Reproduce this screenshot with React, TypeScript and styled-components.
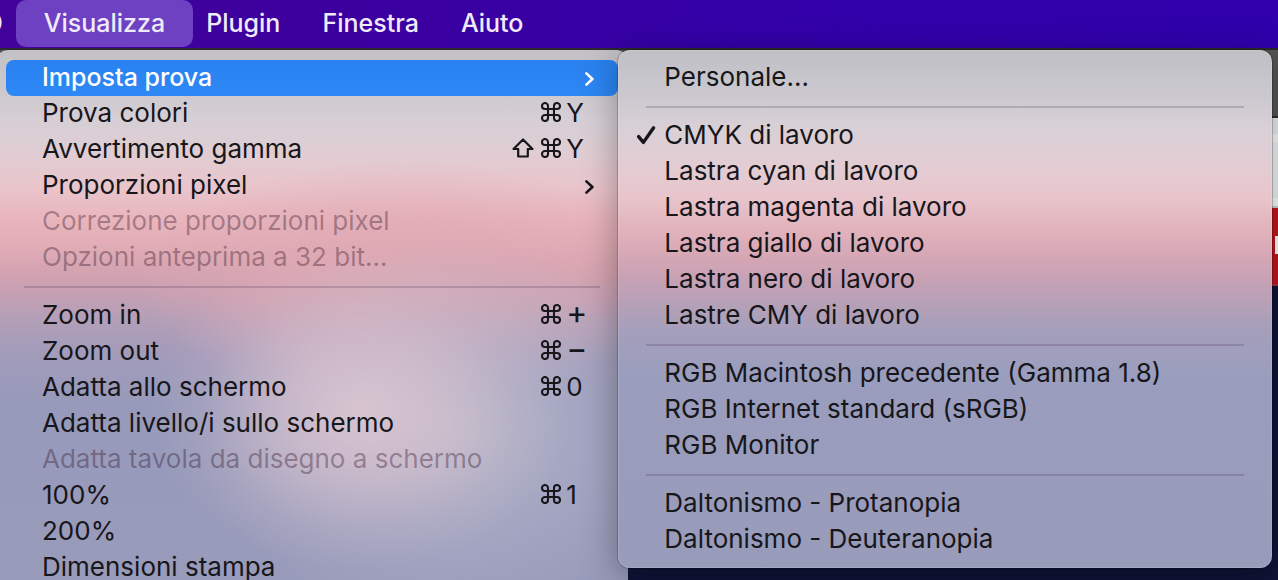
import React from "react";
import styled, { createGlobalStyle, css } from "styled-components";

const GlobalStyle = createGlobalStyle`
  *, *::before, *::after { box-sizing: border-box; }
  body {
    margin: 0;
    overflow: hidden;
    background: #0f1438;
    font-family: Inter, "Liberation Sans", sans-serif;
  }
  button {
    font: inherit;
    color: inherit;
    border: 0;
    background: none;
    margin: 0;
    padding: 0;
  }
`;

const Screen = styled.div`
  display: flex;
  flex-direction: column;
  height: 100vh;
  overflow: hidden;
`;

const MenuBar = styled.nav`
  display: flex;
  flex: none;
  height: 48px;
  padding-bottom: 1px;
  margin-left: -52px;
  background: linear-gradient(90deg, #42039a 0%, #3c009f 30%, #3300a8 60%, #2f00ac 100%);
  font-size: 25px;
  font-weight: 500;
  color: #f0eafa;
  text-shadow: 0 2px 3px rgba(0, 0, 0, 0.25);
`;

const BarButton = styled.button<{ $open?: boolean }>`
  padding: 0 21px 2px;
  white-space: nowrap;
  ${({ $open }) =>
    $open &&
    css`
      padding: 0 28px 2px;
      margin: 0 -8px;
      border-radius: 10px;
      background: #6d41c2;
    `}
`;

const Desktop = styled.main`
  display: grid;
  flex: 1;
  min-height: 0;
  grid-template: minmax(0, 1fr) / minmax(0, 1fr);
  & > * {
    grid-area: 1 / 1;
  }
`;

const Backdrop = styled.div`
  display: flex;
  flex-direction: column;
  border-top: 2px solid #2c2b2c;
`;

const Band = styled.div<{ $height: number; $color: string }>`
  flex: none;
  height: ${({ $height }) => $height}px;
  background: ${({ $color }) => $color};
`;

const RedBanner = styled.div`
  display: flex;
  justify-content: flex-end;
  align-items: center;
  flex: none;
  height: 78px;
  padding-bottom: 2px;
  background: #c2171f;
  border-bottom: 2px solid #b0303b;
`;

const BannerMark = styled.span`
  width: 3px;
  height: 18px;
  background: #ffffff;
`;

const MenuLayer = styled.div`
  display: flex;
  align-items: flex-start;
  padding-top: 2px;
  margin: 0 6px 0 -4px;
`;

const Menu = styled.ul`
  list-style: none;
  margin: 0;
  padding: 10px;
  font-size: 26px;
  line-height: 36px;
  color: #17161a;
`;

const MainMenu = styled(Menu)`
  flex: 632 1 0;
  min-width: 0;
  min-height: 100%;
  border-radius: 12px 12px 0 0;
  background:
    radial-gradient(ellipse 210px 160px at 365px 360px, rgba(221, 199, 210, 0.9), rgba(220, 195, 207, 0.65) 35%, rgba(216, 190, 204, 0.18) 75%, rgba(216, 190, 204, 0) 100%),
    radial-gradient(ellipse 250px 190px at 450px 380px, rgba(184, 186, 202, 0.9), rgba(178, 180, 202, 0.5) 50%, rgba(170, 174, 202, 0) 100%),
    radial-gradient(ellipse 270px 120px at 410px 230px, rgba(224, 169, 179, 0.9), rgba(223, 169, 180, 0.55) 50%, rgba(222, 170, 182, 0) 100%),
    linear-gradient(180deg, #c3c1c6 0, #cbc8ce 38px, #d6cfd5 70px, #e0cdd3 104px, #e9c5cb 138px, #e9b6bd 168px, #e2adb6 194px, #d6a4b1 218px, #c7a0b2 242px, #b49fb7 268px, #a29bba 304px, #979abb 356px, #999bba 530px);
`;

const SubMenu = styled(Menu)`
  position: relative;
  flex: 654 1 0;
  min-width: 0;
  margin-left: -10px;
  border-radius: 12px;
  background: linear-gradient(180deg, #bfbfc5 0, #cccad0 50px, #d9d0d6 78px, #e3ccd3 118px, #e9c4cb 148px, #e2b2bc 180px, #d5a6b4 208px, #c5a1b4 232px, #b3a0b7 258px, #a39fbc 285px, #9a9dbd 330px, #989bb9 518px);
  box-shadow:
    inset 0 0 0 1px rgba(255, 255, 255, 0.15),
    0 0 0 1px rgba(0, 0, 0, 0.2),
    0 8px 36px rgba(0, 0, 0, 0.35);
`;

const Item = styled.button<{ $active?: boolean }>`
  display: flex;
  align-items: center;
  width: 100%;
  height: 36px;
  padding-right: 24px;
  text-align: left;
  white-space: nowrap;
  border-radius: 8px;
  &:disabled {
    color: rgba(40, 10, 30, 0.36);
  }
  ${({ $active }) =>
    $active &&
    css`
      color: #fff;
      font-size: 25px;
      font-weight: 500;
      background: linear-gradient(#2881ee, #2e88f6);
    `}
`;

const Gutter = styled.span`
  display: flex;
  flex: none;
  justify-content: flex-end;
  width: 36px;
  padding: 0 8px 2px 0;
`;

const Label = styled.span`
  flex: 1;
  padding-bottom: 2px;
`;

const Disclosure = styled.span`
  display: flex;
  padding-top: 2px;
`;

const Modifiers = styled.span`
  display: flex;
  gap: 7px;
  padding-bottom: 4px;
`;

const Key = styled.span<{ $symbol: boolean }>`
  width: 33px;
  padding: 0 0 ${({ $symbol }) => ($symbol ? 6 : 2)}px 5px;
  font-size: ${({ $symbol }) => ($symbol ? 32 : 26)}px;
`;

const Separator = styled.li`
  height: 2px;
  margin: 10px 18px;
  background: rgba(60, 30, 70, 0.2);
`;

const CommandIcon = () => (
  <svg width="20" height="20" viewBox="0 0 20 20" fill="none" stroke="currentColor" strokeWidth="2.1" role="img" aria-label="Comando">
    <path d="M13 4v12a3 3 0 1 0 3-3H4a3 3 0 1 0 3 3V4a3 3 0 1 0-3 3h12a3 3 0 1 0-3-3z" />
  </svg>
);

const ShiftIcon = () => (
  <svg width="22" height="20" viewBox="0 0 22 20" fill="none" stroke="currentColor" strokeWidth="2.2" strokeLinejoin="round" role="img" aria-label="Maiuscole">
    <path d="M11 1.5 20.5 11H15.8V18.5H6.2V11H1.5z" />
  </svg>
);

const ChevronIcon = () => (
  <svg width="10" height="16" viewBox="0 0 10 16" fill="none" stroke="currentColor" strokeWidth="2.6" strokeLinecap="round" strokeLinejoin="round" aria-hidden="true">
    <path d="M2.4 2.4 8.4 8 2.4 13.6" />
  </svg>
);

const CheckIcon = () => (
  <svg width="20" height="20" viewBox="0 0 20 20" fill="none" stroke="currentColor" strokeWidth="3.4" strokeLinecap="round" strokeLinejoin="round" aria-hidden="true">
    <path d="M2.6 11.6 7.4 17.4 17.6 2.8" />
  </svg>
);

type Entry = {
  label: string;
  shortcut?: string;
  shift?: boolean;
  submenu?: boolean;
  active?: boolean;
  disabled?: boolean;
  checked?: boolean;
};

const viewGroups: Entry[][] = [
  [
    { label: "Imposta prova", submenu: true, active: true },
    { label: "Prova colori", shortcut: "Y" },
    { label: "Avvertimento gamma", shortcut: "Y", shift: true },
    { label: "Proporzioni pixel", submenu: true },
    { label: "Correzione proporzioni pixel", disabled: true },
    { label: "Opzioni anteprima a 32 bit...", disabled: true },
  ],
  [
    { label: "Zoom in", shortcut: "+" },
    { label: "Zoom out", shortcut: "−" },
    { label: "Adatta allo schermo", shortcut: "0" },
    { label: "Adatta livello/i sullo schermo" },
    { label: "Adatta tavola da disegno a schermo", disabled: true },
    { label: "100%", shortcut: "1" },
    { label: "200%" },
    { label: "Dimensioni stampa" },
  ],
];

const proofGroups: Entry[][] = [
  [{ label: "Personale..." }],
  [
    { label: "CMYK di lavoro", checked: true },
    { label: "Lastra cyan di lavoro" },
    { label: "Lastra magenta di lavoro" },
    { label: "Lastra giallo di lavoro" },
    { label: "Lastra nero di lavoro" },
    { label: "Lastre CMY di lavoro" },
  ],
  [
    { label: "RGB Macintosh precedente (Gamma 1.8)" },
    { label: "RGB Internet standard (sRGB)" },
    { label: "RGB Monitor" },
  ],
  [{ label: "Daltonismo - Protanopia" }, { label: "Daltonismo - Deuteranopia" }],
];

const MenuGroups = ({ groups }: { groups: Entry[][] }) => (
  <>
    {groups.map((group, index) => (
      <React.Fragment key={index}>
        {index > 0 && <Separator role="separator" />}
        {group.map((entry) => (
          <li key={entry.label} role="none">
            <Item
              type="button"
              role={entry.checked ? "menuitemcheckbox" : "menuitem"}
              aria-checked={entry.checked}
              aria-haspopup={entry.submenu ? "menu" : undefined}
              disabled={entry.disabled}
              $active={entry.active}
            >
              <Gutter>{entry.checked && <CheckIcon />}</Gutter>
              <Label>{entry.label}</Label>
              {entry.submenu && (
                <Disclosure>
                  <ChevronIcon />
                </Disclosure>
              )}
              {entry.shortcut && (
                <>
                  <Modifiers>
                    {entry.shift && <ShiftIcon />}
                    <CommandIcon />
                  </Modifiers>
                  <Key $symbol={"+−".includes(entry.shortcut)}>{entry.shortcut}</Key>
                </>
              )}
            </Item>
          </li>
        ))}
      </React.Fragment>
    ))}
  </>
);

export default function App() {
  return (
    <>
      <GlobalStyle />
      <Screen>
        <MenuBar>
          <BarButton type="button">3D</BarButton>
          <BarButton type="button" $open aria-expanded="true">Visualizza</BarButton>
          <BarButton type="button">Plugin</BarButton>
          <BarButton type="button">Finestra</BarButton>
          <BarButton type="button">Aiuto</BarButton>
        </MenuBar>
        <Desktop>
          <Backdrop>
            <Band $height={66} $color="#565656" />
            <Band $height={2} $color="#2e2e2e" />
            <Band $height={16} $color="#eef1f2" />
            <Band $height={8} $color="#fcfdfd" />
            <Band $height={56} $color="#f2f5f6" />
            <Band $height={8} $color="#fefefe" />
            <Band $height={2} $color="#cdd2d5" />
            <RedBanner>
              <BannerMark />
            </RedBanner>
          </Backdrop>
          <MenuLayer>
            <MainMenu role="menu" aria-label="Visualizza">
              <MenuGroups groups={viewGroups} />
            </MainMenu>
            <SubMenu role="menu" aria-label="Imposta prova">
              <MenuGroups groups={proofGroups} />
            </SubMenu>
          </MenuLayer>
        </Desktop>
      </Screen>
    </>
  );
}
